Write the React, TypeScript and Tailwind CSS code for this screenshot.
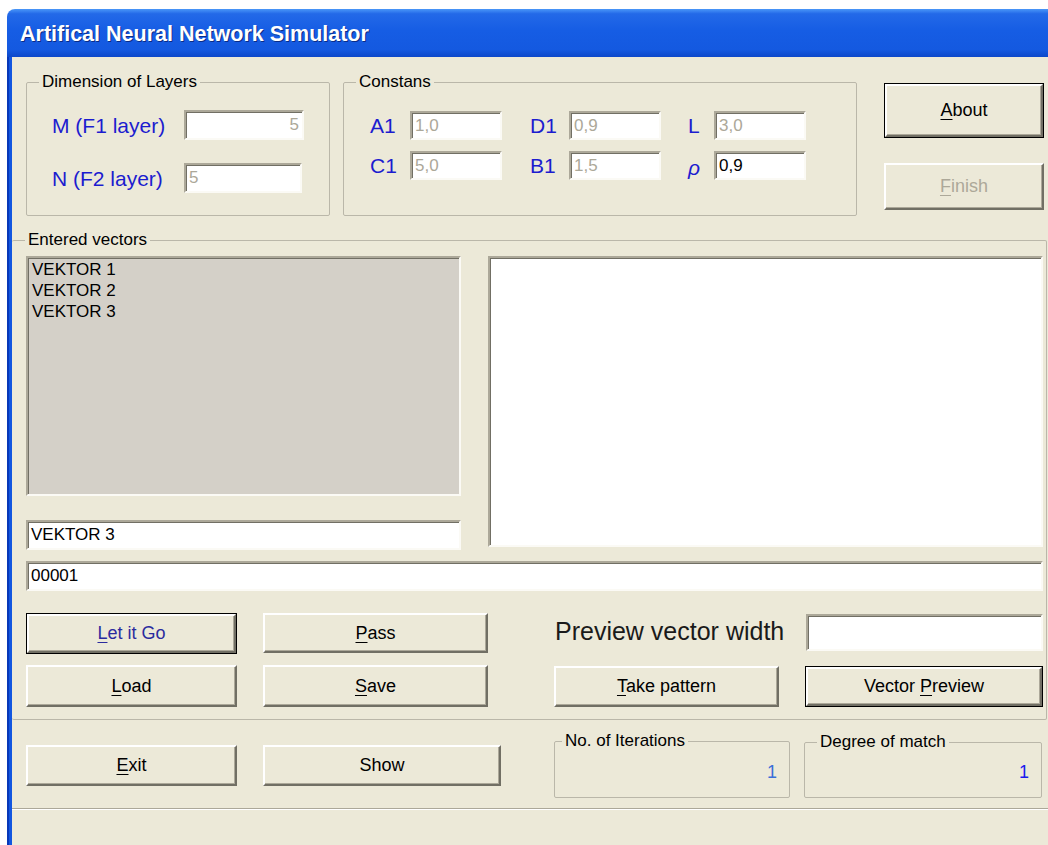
import type { ReactNode } from "react"

// classic 3D edges used by the dialog controls
const sunken =
  "border-2 border-t-[#aca899] border-l-[#aca899] border-b-[#fbfaf5] border-r-[#fbfaf5] shadow-[inset_1px_1px_0_#716f64]"
const raised =
  "border-2 border-t-white border-l-white border-b-[#716f64] border-r-[#716f64] shadow-[inset_-1px_-1px_0_#aca899]"

function Key({ children }: { children: ReactNode }) {
  return <span className="underline underline-offset-[3px]">{children}</span>
}

function Button({
  children,
  className = "",
  primary = false,
  disabled = false,
  tone = "text-black",
}: {
  children: ReactNode
  className?: string
  primary?: boolean
  disabled?: boolean
  tone?: string
}) {
  const face = (
    <div
      className={`flex h-full w-full items-center justify-center bg-[#ece9d8] text-[18px] ${raised} ${
        disabled ? "text-[#aca899]" : tone
      }`}
    >
      {children}
    </div>
  )
  return <div className={`${primary ? "border border-black" : ""} ${className}`}>{face}</div>
}

function Field({
  value,
  className = "",
  muted = false,
  right = false,
}: {
  value?: string
  className?: string
  muted?: boolean
  right?: boolean
}) {
  return (
    <div
      className={`flex items-center bg-white px-[3px] text-[17px] ${sunken} ${
        muted ? "text-[#aca899]" : "text-black"
      } ${right ? "justify-end" : ""} ${className}`}
    >
      {value}
    </div>
  )
}

function Group({
  title,
  className = "",
  legendClass = "ml-[12px]",
  children,
}: {
  title: string
  className?: string
  legendClass?: string
  children?: ReactNode
}) {
  return (
    <fieldset className={`rounded-[2px] border border-[#bab7a9] ${className}`}>
      <legend className={`px-[3px] text-[17px] leading-[20px] text-black ${legendClass}`}>{title}</legend>
      {children}
    </fieldset>
  )
}

function Label({ children, className = "" }: { children: ReactNode; className?: string }) {
  return <span className={`text-[21px] leading-none text-[#1c1ccf] ${className}`}>{children}</span>
}

export default function App() {
  return (
    <div className="h-[845px] w-[1048px] overflow-hidden bg-white pl-[7px] pt-[9px] font-['Liberation_Sans',Arial,sans-serif]">
      <div className="flex h-[836px] flex-col overflow-hidden rounded-tl-[8px]">
        {/* title bar */}
        <div className="flex h-[48px] shrink-0 items-center bg-[linear-gradient(180deg,#4a97f8_0%,#2369e8_10%,#165de4_45%,#1459e0_85%,#0c47c9_100%)] pl-[13px] pt-[2px]">
          <span className="text-[21.5px] font-bold text-white [text-shadow:1px_1px_0_#0b2c86]">
            Artifical Neural Network Simulator
          </span>
        </div>

        <div className="flex flex-1">
          <div className="w-[5px] border-l-2 border-[#0838b8] bg-[#1256e0]" />

          <div className="flex flex-1 flex-col bg-[#ece9d8]">
            {/* layer sizes, constants, about/finish */}
            <div className="flex items-start pt-[15px]">
              <Group title="Dimension of Layers" className="ml-[14px] h-[144px] w-[304px]">
                <div className="flex flex-col gap-[23px] pl-[25px] pt-[18px]">
                  <div className="flex items-center">
                    <Label className="w-[132px]">M (F1 layer)</Label>
                    <Field value="5" muted right className="h-[30px] w-[120px]" />
                  </div>
                  <div className="flex items-center">
                    <Label className="w-[132px]">N (F2 layer)</Label>
                    <Field value="5" muted className="h-[30px] w-[118px]" />
                  </div>
                </div>
              </Group>

              <Group title="Constans" className="ml-[13px] h-[144px] w-[514px]">
                <div className="flex flex-col gap-[11px] pl-[26px] pt-[19px]">
                  <div className="flex items-center">
                    <Label className="w-[40px]">A1</Label>
                    <Field value="1,0" muted className="h-[29px] w-[92px]" />
                    <Label className="ml-[28px] w-[39px]">D1</Label>
                    <Field value="0,9" muted className="h-[29px] w-[92px]" />
                    <Label className="ml-[27px] w-[26px]">L</Label>
                    <Field value="3,0" muted className="h-[29px] w-[92px]" />
                  </div>
                  <div className="flex items-center">
                    <Label className="w-[40px]">C1</Label>
                    <Field value="5,0" muted className="h-[29px] w-[92px]" />
                    <Label className="ml-[28px] w-[39px]">B1</Label>
                    <Field value="1,5" muted className="h-[29px] w-[92px]" />
                    <Label className="ml-[27px] w-[26px] pt-[3px] text-[18px] italic">ρ</Label>
                    <Field value="0,9" className="h-[29px] w-[92px]" />
                  </div>
                </div>
              </Group>

              <div className="ml-[27px] flex w-[160px] flex-col">
                <Button primary className="mt-[11px] h-[55px]">
                  <span>
                    <Key>A</Key>bout
                  </span>
                </Button>
                <Button disabled className="mt-[25px] h-[47px]">
                  <span>
                    <Key>F</Key>inish
                  </span>
                </Button>
              </div>
            </div>

            {/* vectors */}
            <Group
              title="Entered vectors"
              className="mt-[14px] h-[490px] w-[1035px] border-l-0"
              legendClass="ml-[13px]"
            >
              <div className="pl-[14px] pt-[6px]">
                <div className="flex gap-[27px]">
                  <div className="flex w-[435px] flex-col">
                    <div className={`h-[240px] bg-[#d4d0c8] px-[4px] pt-[1px] text-[17px] leading-[21px] text-black ${sunken}`}>
                      <div>VEKTOR 1</div>
                      <div>VEKTOR 2</div>
                      <div>VEKTOR 3</div>
                    </div>
                    <Field value="VEKTOR 3" className="mt-[24px] h-[30px]" />
                  </div>
                  <div className={`h-[291px] w-[555px] bg-white ${sunken}`} />
                </div>

                <Field value="00001" className="mt-[11px] h-[30px] w-[1017px]" />

                <div className="mt-[22px] flex items-start">
                  <Button primary tone="text-[#2b2b9e]" className="h-[41px] w-[211px]">
                    <span>
                      <Key>L</Key>et it Go
                    </span>
                  </Button>
                  <Button className="ml-[26px] h-[40px] w-[225px]">
                    <span>
                      <Key>P</Key>ass
                    </span>
                  </Button>
                  <div className="ml-[67px] flex h-[38px] w-[251px] items-center whitespace-nowrap text-[25px] text-[#1a1a1a]">
                    Preview vector width
                  </div>
                  <Field className="mt-[1px] h-[37px] w-[237px]" />
                </div>

                <div className="mt-[11px] flex items-start">
                  <Button className="h-[42px] w-[211px]">
                    <span>
                      <Key>L</Key>oad
                    </span>
                  </Button>
                  <Button className="ml-[26px] h-[42px] w-[225px]">
                    <span>
                      <Key>S</Key>ave
                    </span>
                  </Button>
                  <Button className="ml-[66px] mt-[1px] h-[41px] w-[225px]">
                    <span>
                      <Key>T</Key>ake pattern
                    </span>
                  </Button>
                  <Button primary className="ml-[26px] mt-[1px] h-[41px] w-[238px]">
                    <span>
                      Vector <Key>P</Key>review
                    </span>
                  </Button>
                </div>
              </div>
            </Group>

            {/* exit / show and results */}
            <div className="flex h-[88px] shrink-0 items-start">
              <Button className="ml-[14px] mt-[25px] h-[41px] w-[211px]">
                <span>
                  <Key>E</Key>xit
                </span>
              </Button>
              <Button className="ml-[26px] mt-[25px] h-[41px] w-[238px]">Show</Button>
              <Group
                title="No. of Iterations"
                className="ml-[53px] mt-[11px] h-[67px] w-[236px] border-[#aca899]"
                legendClass="ml-[7px]"
              >
                <div className="pr-[12px] pt-[8px] text-right text-[18px] text-[#3a6fd8]">1</div>
              </Group>
              <Group
                title="Degree of match"
                className="ml-[14px] mt-[12px] h-[66px] w-[238px] border-[#aca899]"
                legendClass="ml-[12px]"
              >
                <div className="pr-[12px] pt-[7px] text-right text-[18px] text-[#1a1aee]">1</div>
              </Group>
            </div>

            {/* status bar */}
            <div className="flex-1 border-t border-[#aca899] shadow-[inset_0_1px_0_white]" />
          </div>
        </div>
      </div>
    </div>
  )
}
